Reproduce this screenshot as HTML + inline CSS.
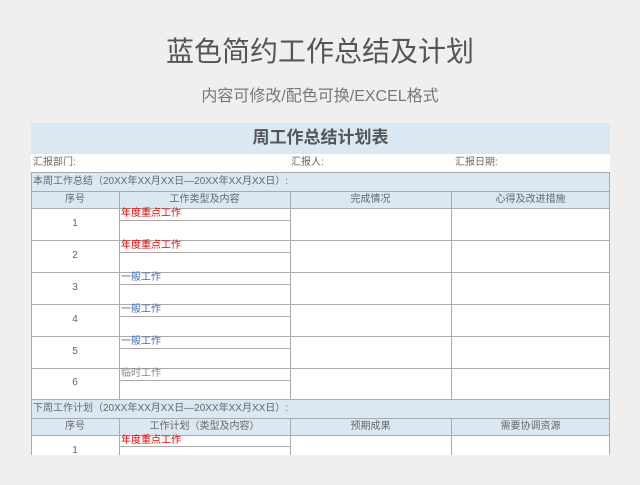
<!DOCTYPE html>
<html><head><meta charset="utf-8"><style>
*{margin:0;padding:0;box-sizing:border-box}
body{width:640px;height:485px;background:#efefef;position:relative;overflow:hidden;font-family:"Liberation Sans","Noto Sans CJK SC",sans-serif;color:#666}
.a{position:absolute}
.h1{left:0;width:640px;top:34px;text-align:center;font-size:28px;color:#555;line-height:36px}
.h2{left:0;width:640px;top:86px;text-align:center;font-size:16px;color:#777;line-height:22px}
.band{background:#dae8f4}
.t{font-size:10px;line-height:12px}
.hl{height:1px;background:#aaa}
.vl{width:1px;background:#aaa}
.c{text-align:center}
</style></head><body>
<div class="a h1">蓝色简约工作总结及计划</div>
<div class="a h2">内容可修改/配色可换/EXCEL格式</div>
<div class="a" style="left:31px;top:123px;width:579px;height:332px;background:#fff"></div>
<div class="a band" style="left:31px;top:123px;width:579px;height:31px"></div>
<div class="a c" style="left:31px;top:126px;width:579px;font-size:17px;font-weight:bold;color:#555;line-height:24px">周工作总结计划表</div>
<div class="a t" style="left:33px;top:157px">汇报部门:</div>
<div class="a t" style="left:291px;top:157px">汇报人:</div>
<div class="a t" style="left:455px;top:157px">汇报日期:</div>
<div class="a band" style="left:31px;top:172px;width:579px;height:36px"></div>
<div class="a band" style="left:31px;top:399px;width:579px;height:36px"></div>
<div class="a t" style="left:33px;top:176px">本周工作总结（20XX年XX月XX日—20XX年XX月XX日）:</div>
<div class="a t" style="left:33px;top:403px">下周工作计划（20XX年XX月XX日—20XX年XX月XX日）:</div>
<div class="a t c" style="left:31px;width:88px;top:194px">序号</div>
<div class="a t c" style="left:119px;width:171px;top:194px">工作类型及内容</div>
<div class="a t c" style="left:290px;width:161px;top:194px">完成情况</div>
<div class="a t c" style="left:451px;width:159px;top:194px">心得及改进措施</div>
<div class="a t c" style="left:31px;width:88px;top:421px">序号</div>
<div class="a t c" style="left:119px;width:171px;top:421px">工作计划（类型及内容）</div>
<div class="a t c" style="left:290px;width:161px;top:421px">预期成果</div>
<div class="a t c" style="left:451px;width:159px;top:421px">需要协调资源</div>
<!-- horizontal lines -->
<div class="a hl" style="left:31px;top:172px;width:579px"></div>
<div class="a hl" style="left:31px;top:191px;width:579px"></div>
<div class="a hl" style="left:31px;top:208px;width:579px"></div>
<div class="a hl" style="left:31px;top:240px;width:579px"></div>
<div class="a hl" style="left:31px;top:272px;width:579px"></div>
<div class="a hl" style="left:31px;top:304px;width:579px"></div>
<div class="a hl" style="left:31px;top:336px;width:579px"></div>
<div class="a hl" style="left:31px;top:368px;width:579px"></div>
<div class="a hl" style="left:31px;top:399px;width:579px"></div>
<div class="a hl" style="left:31px;top:418px;width:579px"></div>
<div class="a hl" style="left:31px;top:435px;width:579px"></div>
<div class="a hl" style="left:119px;top:220px;width:171px"></div>
<div class="a hl" style="left:119px;top:252px;width:171px"></div>
<div class="a hl" style="left:119px;top:284px;width:171px"></div>
<div class="a hl" style="left:119px;top:316px;width:171px"></div>
<div class="a hl" style="left:119px;top:348px;width:171px"></div>
<div class="a hl" style="left:119px;top:380px;width:171px"></div>
<div class="a hl" style="left:119px;top:446px;width:171px"></div>
<!-- vertical -->
<div class="a vl" style="left:31px;top:172px;height:283px"></div>
<div class="a vl" style="left:609px;top:172px;height:283px"></div>
<div class="a vl" style="left:119px;top:191px;height:208px"></div>
<div class="a vl" style="left:290px;top:191px;height:208px"></div>
<div class="a vl" style="left:451px;top:191px;height:208px"></div>
<div class="a vl" style="left:119px;top:418px;height:37px"></div>
<div class="a vl" style="left:290px;top:418px;height:37px"></div>
<div class="a vl" style="left:451px;top:418px;height:37px"></div>
<!-- row numbers -->
<div class="a t c" style="left:31px;width:88px;top:218px">1</div>
<div class="a t c" style="left:31px;width:88px;top:250px">2</div>
<div class="a t c" style="left:31px;width:88px;top:282px">3</div>
<div class="a t c" style="left:31px;width:88px;top:314px">4</div>
<div class="a t c" style="left:31px;width:88px;top:346px">5</div>
<div class="a t c" style="left:31px;width:88px;top:377px">6</div>
<div class="a t c" style="left:31px;width:88px;top:445px">1</div>
<div class="a t" style="left:121px;top:208px;color:#e00">年度重点工作</div>
<div class="a t" style="left:121px;top:240px;color:#e00">年度重点工作</div>
<div class="a t" style="left:121px;top:272px;color:#3a6cc0">一般工作</div>
<div class="a t" style="left:121px;top:304px;color:#3a6cc0">一般工作</div>
<div class="a t" style="left:121px;top:336px;color:#3a6cc0">一般工作</div>
<div class="a t" style="left:121px;top:368px;color:#888">临时工作</div>
<div class="a t" style="left:121px;top:435px;color:#e00">年度重点工作</div>
</body></html>
